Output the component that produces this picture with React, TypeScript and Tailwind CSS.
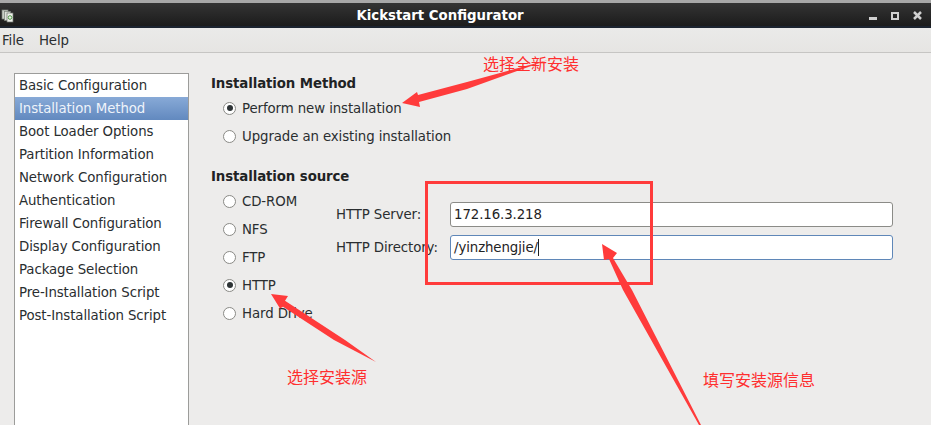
const items = [
  "Basic Configuration",
  "Installation Method",
  "Boot Loader Options",
  "Partition Information",
  "Network Configuration",
  "Authentication",
  "Firewall Configuration",
  "Display Configuration",
  "Package Selection",
  "Pre-Installation Script",
  "Post-Installation Script",
];

function Radio({ label, checked }: { label: string; checked?: boolean }) {
  return (
    <div className="flex h-[28px] items-center">
      <span className="flex h-[13px] w-[13px] items-center justify-center rounded-full border border-[#8a8a86] bg-white">
        {checked ? <span className="h-[6px] w-[6px] rounded-full bg-[#2e3436]" /> : null}
      </span>
      <span className="ml-[6px]">{label}</span>
    </div>
  );
}

export default function App() {
  return (
    <div
      className="relative flex h-[425px] w-[931px] flex-col overflow-hidden bg-[#edeceb] text-[13.33px] leading-[23px] tracking-[-0.1px] text-[#2a2e30]"
      style={{ fontFamily: '"DejaVu Sans", sans-serif' }}
    >
      <div className="flex h-[28px] shrink-0 items-center border-t-[3px] border-b-2 border-t-[#a8a8a8] border-b-[#1c2430] bg-gradient-to-b from-[#343434] to-[#1c1c1c] pt-[2px] text-white">
        <svg width="13" height="14" viewBox="0 0 13 14" className="ml-[1px] shrink-0">
          <rect x="1" y="1" width="6" height="9" fill="#c9cec6" stroke="#7a807a" strokeWidth="0.7" />
          <rect x="3.5" y="2.5" width="6" height="9" fill="#dfe3dc" stroke="#7a807a" strokeWidth="0.7" />
          <rect x="6" y="4" width="6" height="9" fill="#eef0ec" stroke="#6d736d" strokeWidth="0.7" />
          <circle cx="9" cy="8.5" r="1.8" fill="none" stroke="#4f9a45" strokeWidth="1" />
        </svg>
        <div className="ml-[342px] w-[168px] text-center text-[13.3px] font-bold tracking-normal whitespace-nowrap">Kickstart Configurator</div>
        <div className="ml-auto flex items-center">
          <span className="mt-[6px] h-[3px] w-[8px] bg-[#d0d0d0]" />
          <span className="ml-[14px] h-[8px] w-[8px] border-2 border-[#d0d0d0]" />
          <svg width="9" height="9" viewBox="0 0 9 9" className="mr-[9px] ml-[14px]">
            <path d="M1 1L8 8M8 1L1 8" stroke="#d0d0d0" strokeWidth="2.5" />
          </svg>
        </div>
      </div>

      <div className="flex h-[25px] shrink-0 items-center border-b border-[#c6c5c3] bg-gradient-to-b from-[#eaeae9] to-[#e6e5e3] pl-[2px]">
        <span>File</span>
        <span className="ml-[15px]">Help</span>
      </div>

      <div className="flex min-h-0 flex-1 pt-[20px] pl-[14px]">
        <div className="h-[400px] w-[175px] shrink-0 border border-[#9c9c9a] bg-white">
          {items.map((item, i) => (
            <div
              key={item}
              className={
                i === 1
                  ? "h-[23px] bg-gradient-to-b from-[#88aad7] to-[#6289bf] pl-[4px] text-[#eef3fa]"
                  : "h-[23px] pl-[4px]"
              }
            >
              {item}
            </div>
          ))}
        </div>

        <div className="ml-[22px] flex-1 pr-[38px]">
          <div className="mt-[-1px] font-bold text-[#1f2324]">Installation Method</div>
          <div className="mt-[-1px] pl-[12px]">
            <Radio label="Perform new installation" checked />
            <Radio label="Upgrade an existing installation" />
          </div>
          <div className="mt-[15px] font-bold text-[#1f2324]">Installation source</div>
          <div className="flex">
            <div className="mt-[-1px] w-[125px] shrink-0 pl-[12px]">
              <Radio label="CD-ROM" />
              <Radio label="NFS" />
              <Radio label="FTP" />
              <Radio label="HTTP" checked />
              <Radio label="Hard Drive" />
            </div>
            <div className="flex-1 pt-[14px]">
              <div className="flex h-[25px] items-center">
                <span className="w-[114px] shrink-0">HTTP Server:</span>
                <div className="flex h-[25px] flex-1 items-center rounded-[3px] border border-[#8b8b87] bg-white pl-[3px] text-[#1f2324]">
                  172.16.3.218
                </div>
              </div>
              <div className="mt-[8px] flex h-[25px] items-center">
                <span className="w-[114px] shrink-0">HTTP Directory:</span>
                <div className="flex h-[25px] flex-1 items-center rounded-[3px] border border-[#5f87b8] bg-white pl-[3px] text-[#1f2324]">
                  /yinzhengjie/
                  <span className="h-[17px] w-px bg-[#1f2324]" />
                </div>
              </div>
            </div>
          </div>
        </div>
      </div>

      {/* annotations lying over the window */}
      <div className="absolute top-[181px] left-[425px] h-[104px] w-[228px] border-[3px] border-[#ff3b3b]" />
      <svg className="absolute inset-0" width="931" height="425" viewBox="0 0 931 425">
        <polygon points="402,103 417,92 418,95 467,82 548,60 467,89 419,102 420,107" fill="#ff3b3b" />
        <polygon points="271,294 288,296 285,300.7 345,340 376,362 334,340 283,306.7 280,308.5" fill="#ff3b3b" />
        <polygon points="602,244 617,253 613,258 632,290 701,425 699,425 623,290 609,259 604,260" fill="#ff3b3b" />
      </svg>
      <div
        className="absolute top-[52px] left-[483px] text-[16px] leading-[22px] tracking-normal whitespace-nowrap text-[#ff2f2f]"
        style={{ fontFamily: '"Noto Sans CJK SC", sans-serif' }}
      >
        选择全新安装
      </div>
      <div
        className="absolute top-[365px] left-[287px] text-[16px] leading-[22px] tracking-normal whitespace-nowrap text-[#ff2f2f]"
        style={{ fontFamily: '"Noto Sans CJK SC", sans-serif' }}
      >
        选择安装源
      </div>
      <div
        className="absolute top-[368px] left-[703px] text-[16px] leading-[22px] tracking-normal whitespace-nowrap text-[#ff2f2f]"
        style={{ fontFamily: '"Noto Sans CJK SC", sans-serif' }}
      >
        填写安装源信息
      </div>
    </div>
  );
}
